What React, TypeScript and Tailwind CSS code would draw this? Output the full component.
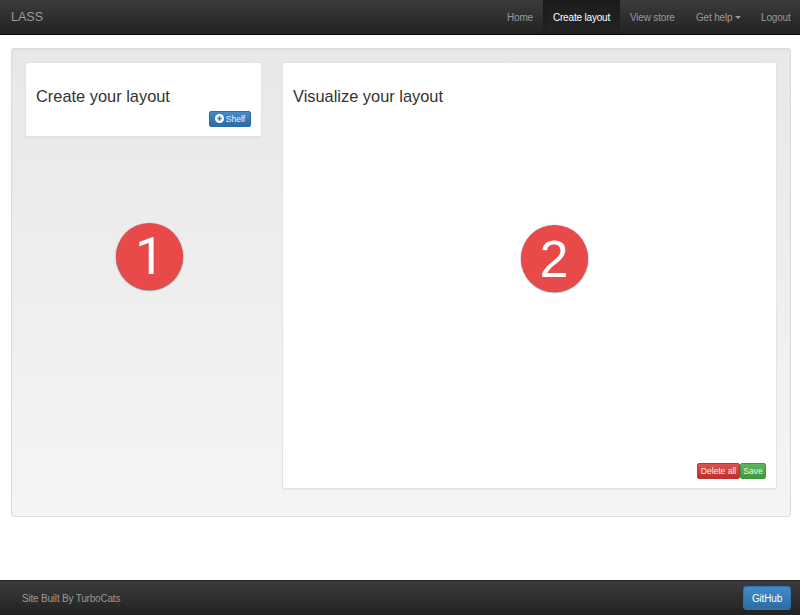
const nav = "flex items-center whitespace-nowrap text-[10px] tracking-[-0.18px] text-[#999]";

function Badge({ n, className }: { n: string; className: string }) {
  return (
    <div className={`absolute flex size-[67px] items-center justify-center rounded-full bg-[#e84a4a] text-white text-[52px] leading-none shadow-[0_0.5px_1.5px_rgba(0,0,0,0.65)] ${className}`}>
      {n}
    </div>
  );
}

const btn = "flex items-center justify-center rounded-[2px] border text-[8.5px] leading-none text-white/90 whitespace-nowrap";
const card = "flex flex-col rounded-[2px] border border-[#e4e4e4] bg-white px-[10px] pt-[23px] shadow-[0_1px_1px_rgba(0,0,0,0.05)]";

export default function App() {
  return (
    <div className="relative flex h-[615px] w-[800px] flex-col bg-white font-['Liberation_Sans',Arial,sans-serif] text-[#333]">
      <header className="flex h-[35px] shrink-0 justify-between border-b border-[#080808] bg-linear-to-b from-[#3c3c3c] to-[#222] pl-[11px]">
        <div className="flex items-center text-[12.5px] text-[#999]">LASS</div>
        <nav className="flex">
          <span className={`${nav} w-[46px]`}>Home</span>
          <span className="-ml-[10px] flex w-[77px] items-center justify-center bg-linear-to-b from-[#1d1d1d] to-[#242424] text-[10px] tracking-[-0.18px] text-white shadow-[inset_0_2px_6px_rgba(0,0,0,0.2)]">Create layout</span>
          <span className={`${nav} ml-[10px] w-[66px]`}>View store</span>
          <span className={`${nav} w-[65px]`}>Get help<i className="mt-px ml-[3px] border-x-[3px] border-t-[3px] border-x-transparent border-t-[#999]" /></span>
          <span className={`${nav} w-[39px]`}>Logout</span>
        </nav>
      </header>
      <main className="mx-[11px] mt-[13px] flex h-[469px] w-[780px] shrink-0 items-start gap-[20px] rounded-[3px] border border-[#dcdcdc] bg-linear-to-b from-[#e8e8e8] to-[#f5f5f5] pl-[13px] pt-[13px] shadow-[inset_0_1px_2px_rgba(0,0,0,0.05)]">
        <section className={`${card} h-[75px] w-[237px]`}>
          <h3 className="text-[16.4px] leading-[20px]">Create your layout</h3>
          <div className="mt-[5px] flex justify-end">
            <button className={`${btn} h-[16px] w-[42px] gap-[2px] border-[#2b6da6] bg-linear-to-b from-[#428bca] to-[#2d6ca2]`}>
              <svg viewBox="0 0 16 16" className="-mt-px size-[9px]"><circle cx="8" cy="8" r="8" fill="white" /><path d="M8 4v8M4 8h8" stroke="#397db7" strokeWidth="3" /></svg>
              Shelf
            </button>
          </div>
        </section>
        <section className={`${card} h-[427px] w-[495px] justify-between pb-[9px]`}>
          <h3 className="text-[16.4px] leading-[20px]">Visualize your layout</h3>
          <div className="flex justify-end">
            <button className={`${btn} h-[16px] w-[43px] border-[#bd3532] bg-linear-to-b from-[#d9534f] to-[#c12e2a]`}>Delete all</button>
            <button className={`${btn} h-[16px] w-[26px] border-[#439743] bg-linear-to-b from-[#5cb85c] to-[#419641]`}>Save</button>
          </div>
        </section>
      </main>
      <Badge n="1" className="left-[115.5px] top-[223px] pl-[1px] font-[Roboto,sans-serif]" />
      <Badge n="2" className="left-[520.5px] top-[225px]" />
      <footer className="mt-auto flex h-[35px] shrink-0 items-center justify-between border-t border-[#292929] bg-linear-to-b from-[#3c3c3c] to-[#222] pr-[9px] pl-[22px]">
        <span className="text-[10px] tracking-[-0.2px] text-[#999]">Site Built By TurboCats</span>
        <button className="h-[24px] w-[48px] rounded-[3px] border border-[#3073ae] bg-linear-to-b from-[#428bca] to-[#2d6ca2] text-[10px] tracking-[-0.18px] text-white">GitHub</button>
      </footer>
    </div>
  );
}
